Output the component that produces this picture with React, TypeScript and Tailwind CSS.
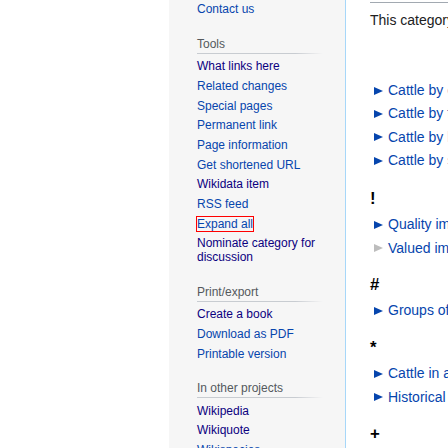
import React from "react";

type Link = { label: string; visited?: boolean; boxed?: boolean };

type PortalProps = {
  title?: string;
  items: Link[];
  first?: boolean;
};

const portals: PortalProps[] = [
  { items: [{ label: "Contact us" }], first: true },
  {
    title: "Tools",
    items: [
      { label: "What links here", visited: true },
      { label: "Related changes" },
      { label: "Special pages" },
      { label: "Permanent link" },
      { label: "Page information" },
      { label: "Get shortened URL" },
      { label: "Wikidata item", visited: true },
      { label: "RSS feed" },
      { label: "Expand all", boxed: true },
      { label: "Nominate category for discussion", visited: true },
    ],
  },
  {
    title: "Print/export",
    items: [
      { label: "Create a book", visited: true },
      { label: "Download as PDF" },
      { label: "Printable version" },
    ],
  },
  {
    title: "In other projects",
    items: [
      { label: "Wikipedia", visited: true },
      { label: "Wikiquote", visited: true },
      { label: "Wikispecies" },
    ],
  },
];

type Row = { label: string; empty?: boolean };

// category groups, first one sits under the blank sort-key heading
const groups: { heading?: string; rows: Row[] }[] = [
  {
    rows: [
      { label: "Cattle by country" },
      { label: "Cattle by function" },
      { label: "Cattle by location" },
      { label: "Cattle by status" },
    ],
  },
  {
    heading: "!",
    rows: [{ label: "Quality images of cattle" }, { label: "Valued images of cattle", empty: true }],
  },
  { heading: "#", rows: [{ label: "Groups of cattle" }] },
  {
    heading: "*",
    rows: [{ label: "Cattle in art" }, { label: "Historical images of cattle" }],
  },
  { heading: "+", rows: [] },
];

function Portal({ title, items, first }: PortalProps) {
  return (
    <div className={first ? "" : "mt-[17px]"}>
      {title && (
        <>
          <h3 className="pb-[2px] text-[12px] leading-[14px] text-[#54595d]">{title}</h3>
          <div className="h-px bg-[linear-gradient(to_right,#c8ccd1_0%,#c8ccd1_78%,rgba(200,204,209,0)_100%)]" />
        </>
      )}
      <ul className={title ? "pt-[3.5px]" : ""}>
        {items.map((item) => (
          <li key={item.label} className="py-[3.1px] text-[12px] leading-[13.5px]">
            <a
              href="#"
              className={`${item.visited ? "text-[#0b0080]" : "text-[#0645ad]"} ${
                item.boxed ? "outline outline-[#ff0000]" : ""
              }`}
            >
              {item.label}
            </a>
          </li>
        ))}
      </ul>
    </div>
  );
}

function Bullet({ empty }: { empty?: boolean }) {
  return (
    <svg width="9" height="8" viewBox="0 0 9 8" className="ml-[4px] mr-[5px] shrink-0">
      <polygon points="0,0 9,4 0,8" fill={empty ? "#bdbdbd" : "#0645ad"} />
    </svg>
  );
}

export default function App() {
  return (
    <div className="flex h-[448px] w-[448px] overflow-hidden bg-white font-['Liberation_Sans',Arial,sans-serif]">
      <div className="w-[169px] shrink-0 bg-white" />

      <aside className="w-[176px] shrink-0 bg-[#f6f6f6] pl-[28px] pr-[22px]">
        {portals.map((p, i) => (
          <Portal key={i} {...p} />
        ))}
      </aside>

      <main className="w-[700px] shrink-0 border-l border-[#a7d7f9] bg-white pl-[24px]">
        <div className="h-[3px] border-b border-[#a2a9b1]" />
        <p className="mt-[6px] whitespace-nowrap text-[14px] leading-[22px] text-[#202122]">
          This category has the following 10 subcategories, out of 10 total.
        </p>

        <div className="mt-[48px]">
          {groups.map((g, gi) => (
            <div key={gi}>
              {g.heading && (
                <h3
                  className={`${
                    gi === 1 ? "mt-[17px]" : "mt-[15.5px]"
                  } mb-[4px] text-[16.8px] font-bold leading-[20px] text-black`}
                >
                  {g.heading}
                </h3>
              )}
              {g.rows.map((r) => (
                <div key={r.label} className="flex h-[23.3px] items-center whitespace-nowrap text-[14px]">
                  <Bullet empty={r.empty} />
                  <a href="#" className="text-[#0645ad]">
                    {r.label}
                  </a>
                </div>
              ))}
            </div>
          ))}
        </div>
      </main>
    </div>
  );
}
